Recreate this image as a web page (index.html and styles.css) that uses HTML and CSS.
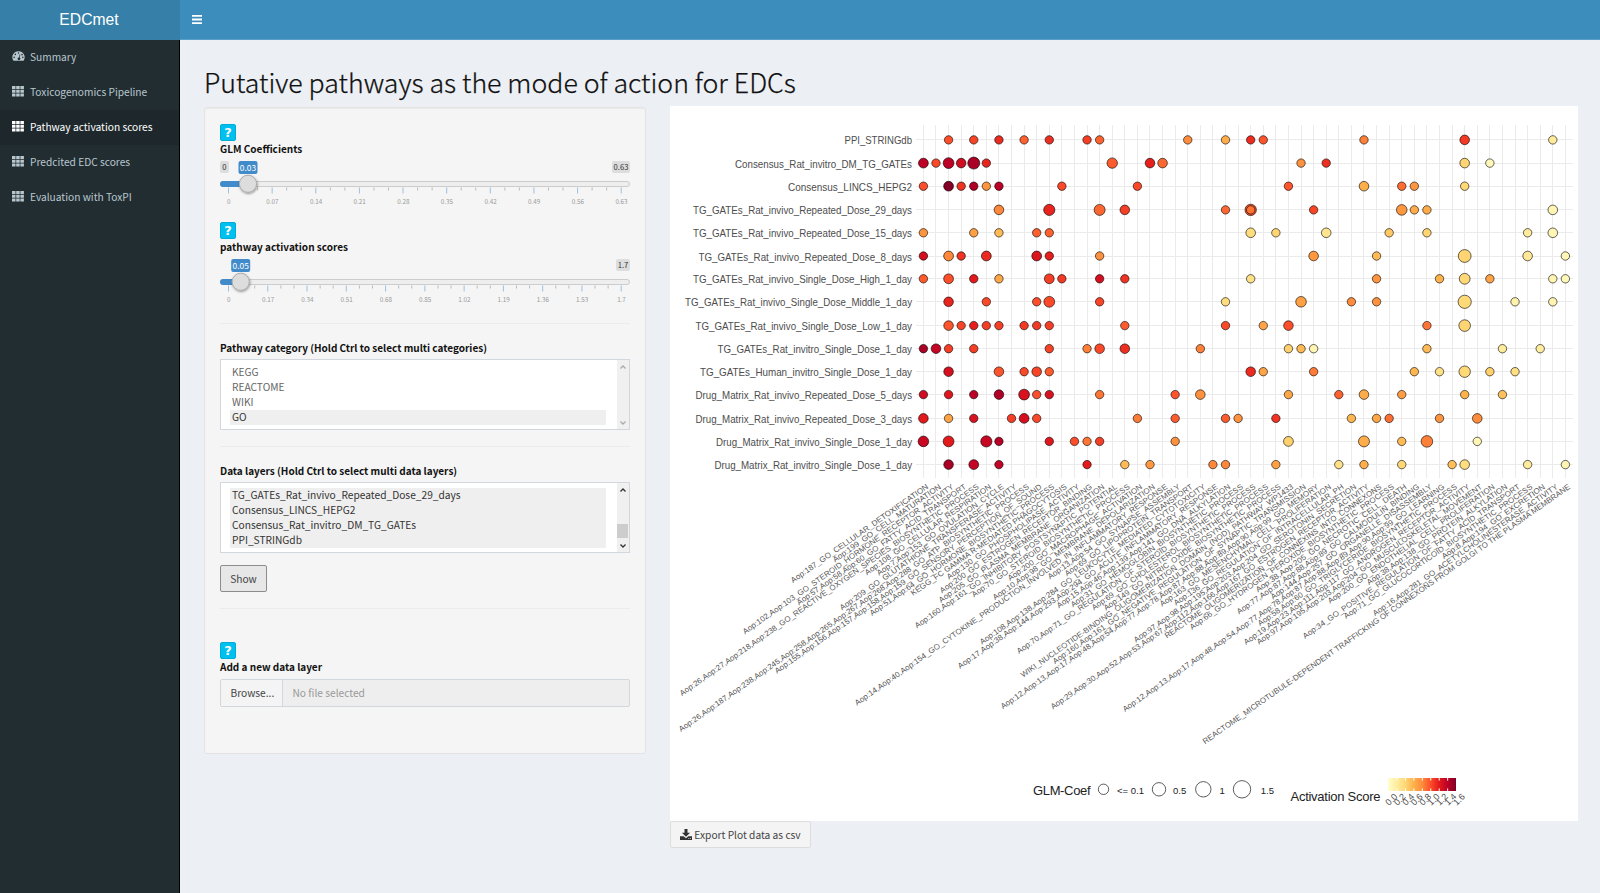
FILE: index.html
```html
<!DOCTYPE html>
<html lang="en">
<head>
<meta charset="utf-8">
<title>EDCmet</title>
<link rel="stylesheet" href="styles.css">
</head>
<body>
<svg class="defs" width="0" height="0">
  <symbol id="grid" viewBox="0 0 12 11"><path d="M0 0h3.500v3H0zM4.200 0h3.500v3H4.200zM8.400 0h3.500v3H8.400zM0 3.750h3.500v3H0zM4.200 3.750h3.500v3H4.200zM8.400 3.750h3.500v3H8.400zM0 7.500h3.500v3H0zM4.200 7.500h3.500v3H4.200zM8.400 7.500h3.500v3H8.400z"/></symbol>
</svg>
<header class="header">
  <div class="logo">EDCmet</div>
  <div class="navbar"><svg class="burger" viewBox="0 0 10 9"><path d="M0 0h10v1.8H0zM0 3.6h10v1.8H0zM0 7.2h10V9H0z"/></svg></div>
</header>
<div class="body">
  <nav class="sidebar">
    <a class="item"><svg class="ico dash" viewBox="0 0 14 12"><path fill-rule="evenodd" d="M7 .8a6.6 6.6 0 0 0-5.6 10.1q.2.3.6.3h10q.4 0 .6-.3A6.6 6.6 0 0 0 7 .8zM7 2a.85.85 0 1 1 0 1.700.85.85 0 0 1 0-1.7zM3.600 3.400a.85.85 0 1 1 0 1.700.85.85 0 0 1 0-1.7zM2.300 6.600a.85.85 0 1 1 0 1.700.85.85 0 0 1 0-1.7zM11.700 6.600a.85.85 0 1 1 0 1.700.85.85 0 0 1 0-1.7zM10.800 3.700a.85.85 0 1 1 0 1.700.85.85 0 0 1 0-1.7zM8.300 4.200l.7.2-.8 3.300a1.400 1.400 0 1 1-.75-.2z"/></svg>Summary</a>
    <a class="item"><svg class="ico"><use href="#grid"/></svg>Toxicogenomics Pipeline</a>
    <a class="item active"><svg class="ico"><use href="#grid"/></svg>Pathway activation scores</a>
    <a class="item"><svg class="ico"><use href="#grid"/></svg>Predcited EDC scores</a>
    <a class="item"><svg class="ico"><use href="#grid"/></svg>Evaluation with ToxPI</a>
  </nav>
  <main class="content">
    <h1 class="title"><span>Putative pathways as the mode of action for EDCs</span></h1>
    <div class="columns">
      <section class="well">
        <div class="help">?</div>
        <label class="label">GLM Coefficients</label>
        <svg class="slider" id="glm" width="412" height="52"></svg>
        <div class="help second">?</div>
        <label class="label">pathway activation scores</label>
        <svg class="slider" id="pas" width="412" height="52"></svg>
        <hr class="rule r1">
        <label class="label wide">Pathway category (Hold Ctrl to select multi categories)</label>
        <div class="select">
          <div class="options"><div>KEGG</div><div>REACTOME</div><div>WIKI</div><div class="sel">GO</div></div>
          <div class="scroll off"><svg viewBox="0 0 6 4"><path d="M.5 3.500L3 1l2.500 2.500"/></svg><svg viewBox="0 0 6 4"><path d="M.5.5L3 3 5.500.5"/></svg></div>
        </div>
        <hr class="rule r2">
        <label class="label wide">Data layers (Hold Ctrl to select multi data layers)</label>
        <div class="select">
          <div class="options"><div class="sel">TG_GATEs_Rat_invivo_Repeated_Dose_29_days</div><div class="sel">Consensus_LINCS_HEPG2</div><div class="sel">Consensus_Rat_invitro_DM_TG_GATEs</div><div class="sel">PPI_STRINGdb</div></div>
          <div class="scroll"><svg viewBox="0 0 6 4"><path d="M.5 3.500L3 1l2.500 2.500"/></svg><i class="thumb"></i><svg viewBox="0 0 6 4"><path d="M.5.5L3 3 5.500.5"/></svg></div>
        </div>
        <button class="show">Show</button>
        <hr class="rule r3">
        <div class="help third">?</div>
        <label class="label">Add a new data layer</label>
        <div class="file"><span class="browse">Browse...</span><span class="name">No file selected</span></div>
      </section>
      <section class="plotcol">
        <svg id="plot" class="plot" width="908" height="715" viewBox="670 106 908 715"></svg>
        <button class="export"><svg viewBox="0 0 12 11"><path fill-rule="evenodd" d="M4.500 0h3v3.700h2.600L6 7.700 1.900 3.700h2.600zM0 7.200h3.600L6 9.300l2.400-2.100H12V11H0zM8.300 9.200h.9v.8h-.9zM10 9.200h.9v.8H10z"/></svg>Export Plot data as csv</button>
      </section>
    </div>
  </main>
</div>
<script src="plot.js"></script>
</body>
</html>
```
FILE: styles.css
```css
* { box-sizing: border-box; }
body { margin: 0; height: 893px; overflow: hidden; background: #ecf0f5; font: 10.2px/15px "Noto Sans CJK SC", "Noto Sans", sans-serif; color: #333; }
.defs { position: absolute; }
.header { display: flex; height: 40px; border-bottom: 1px solid #5a9fc8; background: #3c8dbc; }
.logo { width: 180px; height: 40px; background: #367fa9; color: #fff; font: 15.7px/40px "Liberation Sans", sans-serif; text-align: center; padding-right: 2px; }
.navbar { padding: 15px 12px; }
.burger { display: block; width: 10px; height: 9px; fill: #fff; }
.body { display: flex; height: 853px; }
.sidebar { width: 180px; background: #222d32; border-right: 1px solid #000; }
.item { display: flex; align-items: center; height: 35px; padding: 0 0 3px 12px; color: #b8c7ce; }
.item.active { background: #1e282c; color: #fff; }
.ico { width: 12px; height: 11px; margin-right: 6px; fill: currentColor; }
.ico.dash { width: 13px; height: 12px; margin-right: 5px; }
.content { flex: 1; padding: 21px 22px 0 24px; }
.title { margin: 0; height: 45px; font-size: 26.7px; line-height: 42px; font-weight: 300; color: #111; white-space: nowrap; -webkit-text-stroke: .25px #111; }
.columns { display: flex; gap: 24px; }
.well { width: 442px; height: 647px; margin-top: 1px; padding: 16px 15px 0; background: #f5f5f5; border: 1px solid #e3e3e3; border-radius: 3px; display: flex; flex-direction: column; align-items: flex-start; box-shadow: inset 0 1px 1px rgba(0,0,0,.05); }
.well > * { flex-shrink: 0; }
.help { width: 16px; height: 17px; background: #00c0ef; border: 1px solid #00acd6; border-radius: 2px; color: #fff; font: bold 13px/15px "DejaVu Sans", sans-serif; text-align: center; }
.help.second { margin-top: 13px; }
.help.third { margin-top: 33px; }
.label { height: 15px; line-height: 15px; font-size: 10px; font-weight: 700; color: #111; white-space: nowrap; margin-top: 0; }
.slider { display: block; margin-top: 1px; overflow: visible; font-family: "Noto Sans CJK SC", "Noto Sans", sans-serif; }
.rule { width: 410px; margin: 0; border: 0; border-top: 1px solid #ebebeb; }
.r1 { margin-top: 16px; }
.r2 { margin-top: 16px; }
.label.wide { margin-top: 16px; }
.select { display: flex; width: 410px; height: 71px; margin-top: 4px; border: 1px solid #d2d6de; background: #fff; }
.options { flex: 1; padding: 5px 11px 0 9px; color: #666; }
.options div { height: 15px; line-height: 14px; padding-left: 2px; white-space: nowrap; }
.options .sel { background: #efefef; color: #333; }
.scroll { width: 12px; background: #f0f0f0; display: flex; flex-direction: column; justify-content: space-between; padding: 5px 0 4px; }
.scroll svg { width: 6px; height: 4px; margin-left: 3px; fill: none; stroke: #333; stroke-width: 1.3; }
.scroll.off svg { stroke: #aaa; }
.thumb { width: 11px; height: 14px; background: #cdcdcd; margin: auto 0 6px; }
.show { width: 47px; height: 27px; margin: 12px 0 0; padding: 0; background: #e7e7e7; border: 1px solid #8c8c8c; border-radius: 2px; color: #444; font: inherit; }
.r3 { margin-top: 16px; }
.file { display: flex; width: 410px; height: 28px; margin-top: 5px; border: 1px solid #d2d6de; border-radius: 2px; line-height: 26px; background: #eee; }
.browse { width: 62px; padding-left: 9.5px; background: #f4f4f4; border-right: 1px solid #d2d6de; color: #444; }
.name { padding-left: 9.5px; color: #999; }
.plotcol { display: flex; flex-direction: column; align-items: flex-start; }
.plot { display: block; background: #fff; font-family: "Liberation Sans", Arial, sans-serif; }
.export { width: 141px; height: 27px; padding: 0; border: 1px solid #ddd; border-radius: 2px; background: #f4f4f4; color: #444; font: inherit; display: flex; align-items: center; justify-content: center; white-space: nowrap; }
.export svg { width: 12px; height: 11px; margin-right: 2px; fill: #333; }
.grid-line { stroke: #ebebeb; stroke-width: 1; }
.row-label { font-size: 10.8px; fill: #4d4d4d; text-anchor: end; }
.col-label { font-size: 7.8px; fill: #555; }
.legend-title { font-size: 13px; fill: #222; }
.legend-text { font-size: 9.5px; fill: #222; }
.legend-tick { font-size: 9px; fill: #4d4d4d; }
.dot { stroke: #000; stroke-opacity: .75; stroke-width: .8; }
.key { fill: #fff; stroke: #333; stroke-width: .8; }
.tick-text { font-size: 6.3px; fill: #999; text-anchor: middle; }
.badge { font-size: 7.6px; fill: #333; text-anchor: middle; }
.badge.on { font-size: 8.4px; fill: #fff; }
```
FILE: plot.js
```js
const NS = 'http://www.w3.org/2000/svg';
function add(parent, tag, attrs, text) {
  const e = document.createElementNS(NS, tag);
  for (const k in attrs) e.setAttribute(k, attrs[k]);
  if (text !== undefined) e.textContent = text;
  parent.appendChild(e);
  return e;
}

// Range sliders
function slider(id, cx, value, min, max, maxW, labels, minors) {
  const s = document.getElementById(id);
  const defs = add(s, 'defs', {});
  const sh = add(defs, 'filter', { id: id + 'sh', x: '-50%', y: '-50%', width: '200%', height: '200%' });
  add(sh, 'feDropShadow', { dx: 0.5, dy: 1, stdDeviation: 0.8, 'flood-opacity': 0.4 });
  if (min !== null) {
    add(s, 'rect', { x: 0, y: 4, width: 9, height: 12, rx: 2, fill: '#ddd' });
    add(s, 'text', { x: 4.3, y: 12.8, class: 'badge' }, min);
  }
  add(s, 'rect', { x: 410 - maxW, y: 4, width: maxW, height: 12, rx: 2, fill: '#ddd' });
  add(s, 'text', { x: 410 - maxW / 2, y: 12.8, class: 'badge' }, max);
  add(s, 'rect', { x: 0.5, y: 24.5, width: 409, height: 5, rx: 2.5, fill: '#eee', stroke: '#ccc' });
  add(s, 'rect', { x: 0, y: 24, width: cx, height: 6, rx: 3, fill: '#428bca' });
  const n = labels.length - 1;
  for (let i = 0; i <= n; i++) {
    const x = 8.5 + 392.7 * i / n;
    add(s, 'rect', { x: x - 0.5, y: 30.5, width: 1, height: 6, fill: '#9dc0e0' });
    add(s, 'text', { x: x + 0.3, y: 47, class: 'tick-text' }, labels[i]);
    if (i < n) for (let j = 1; j <= minors; j++)
      add(s, 'rect', { x: x + 392.7 / n * j / (minors + 1) - 0.5, y: 30.5, width: 1, height: 3, fill: '#bbb' });
  }
  add(s, 'circle', { cx: cx, cy: 26.8, r: 8.6, fill: '#ddd', stroke: '#aaa', filter: 'url(#' + id + 'sh)' });
  add(s, 'rect', { x: cx - 9.5, y: 4, width: 19, height: 13, rx: 2, fill: '#428bca' });
  add(s, 'text', { x: cx, y: 13.6, class: 'badge on' }, value);
}
slider('glm', 28, '0.03', '0', '0.63', 18, ['0', '0.07', '0.14', '0.21', '0.28', '0.35', '0.42', '0.49', '0.56', '0.63'], 2);
slider('pas', 20.7, '0.05', null, '1.7', 14, ['0', '0.17', '0.34', '0.51', '0.68', '0.85', '1.02', '1.19', '1.36', '1.53', '1.7'], 2);

// Bubble plot
const plot = document.getElementById('plot');
const X0 = 923.4, DX = 12.588;
const YS = [139.9, 163.1, 186.2, 209.9, 232.8, 256, 278.8, 301.8, 325.6, 348.7, 371.7, 394.6, 418.4, 441.4, 464.6];
const RAMP = ['ffffcc', 'ffeda0', 'fed976', 'feb24c', 'fd8d3c', 'fc4e2a', 'e31a1c', 'bd0026', '800026'];
function color(v) {
  const i = Math.min(7, Math.floor(v)), f = v - i;
  const c = k => [0, 2, 4].map(p => parseInt(RAMP[k].substr(p, 2), 16));
  const a = c(i), b = c(i + 1);
  return 'rgb(' + a.map((q, k) => Math.round(q + (b[k] - q) * f)).join(',') + ')';
}
// Each row: label, label start x, points as "column:colour[:radius]"
const rows = [
  ['PPI_STRINGdb', 844.5, '2:5 4:5.2 6:5.7 8:4.7 10:5.6 13:5.3 14:4.7 21:4 24:3.2 26:5.7 27:4.9 35:4.2 43:5.4:4.8 50:1.1'],
  ['Consensus_Rat_invitro_DM_TG_GATEs', 735, '0:7:4.9 1:5.1 2:7:5.4 3:6.5:4.8 4:7.3:6 5:5.8 15:4.8:5.2 18:5.9:4.8 19:4.6:4.8 30:3.9 32:5.6 43:2.1:4.8 45:0.4'],
  ['Consensus_LINCS_HEPG2', 788, '0:5 2:7.9:4.9 3:5.5 4:7.2 5:3.8 6:7 11:5.1 17:5.1 29:4.9 35:3.1:4.8 38:4.5 39:3.7 43:2'],
  ['TG_GATEs_Rat_invivo_Repeated_Dose_29_days', 693, '6:4.1:4.8 10:5.8:5.6 14:4.6:5.5 16:5.3:4.8 24:4.6 26:4.9:5.7 26:4.4:4.2 31:5.2 38:3.7:5.3 39:3.2 40:3.2 50:0.5:4.8'],
  ['TG_GATEs_Rat_invivo_Repeated_Dose_15_days', 693, '0:3.8 4:3.5 6:2.8 9:4.7 10:4.7 26:1.8:4.8 28:2.1 32:1.4:4.8 37:2.4 40:2.1 48:1.1 50:0.5:4.8'],
  ['TG_GATEs_Rat_invivo_Repeated_Dose_8_days', 698.5, '0:6.4 2:4.1:4.9 3:5.5 5:5.7:4.9 9:6.2:4.9 10:5.9 14:3.9 31:3.7:4.8 36:2.8 43:2.1:6.4 48:1.2:4.8 51:0.5'],
  ['TG_GATEs_Rat_invivo_Single_Dose_High_1_day', 693, '0:4.8 2:5:4.9 4:6 6:3.3 10:5.3:4.9 11:5.4 14:6.4 16:5.5 26:1.6 36:3.8 41:3 43:2:5.4 45:3.4 50:0.6 51:0.4'],
  ['TG_GATEs_Rat_invivo_Single_Dose_Middle_1_day', 685, '2:5.8:4.8 5:5.1 9:5 10:5.1:5.4 14:5.2 24:1.8 30:3.5:5.3 34:4 36:3.9 43:2:6.6 47:0.7 50:0.6'],
  ['TG_GATEs_Rat_invivo_Single_Dose_Low_1_day', 695.5, '2:4.9:4.8 3:5.2 4:5.9 5:5.3 6:5.3 8:5.4 9:5.4 10:5.3 16:4.8 24:5.1 27:3.4 29:5:4.8 40:4.4 43:2.1:5.8'],
  ['TG_GATEs_Rat_invitro_Single_Dose_1_day', 717.5, '0:7.3 1:6.8:4.8 2:5.3 4:5.3 10:5.2 13:4.2 14:5.1:4.8 16:5.6:4.8 22:4.2 29:2.2 30:2.8 31:0.5 40:2.8 46:1.1 49:1'],
  ['TG_GATEs_Human_invitro_Single_Dose_1_day', 700, '2:6.4:4.8 6:4.9:4.8 8:5.1 9:5.2:4.8 10:4.8 26:5.7:4.8 27:3.4 31:4.3 39:2.9 41:1.6 43:2:5.7 45:2.2 47:1.7'],
  ['Drug_Matrix_Rat_invivo_Repeated_Dose_5_days', 695.5, '0:6.5 2:6.1 4:7 6:7.2:4.8 8:6.3:5.4 9:5 10:6.3 14:4.4 20:4.9 22:3.9:4.8 29:3.3 33:4.7 35:3.2:4.8 38:3.6 43:3 46:2.6'],
  ['Drug_Matrix_Rat_invivo_Repeated_Dose_3_days', 695.5, '0:6:4.8 2:3.4 4:6.3 7:5.3 8:6.4:4.9 9:5.1 17:4.3 20:4.8 24:4.8 25:3.9 28:5.5 34:2.9 36:3.3 37:4.5 41:3.8 44:4:4.8'],
  ['Drug_Matrix_Rat_invivo_Single_Dose_1_day', 716, '0:6.7:5.3 2:6:5.4 5:6.7:5.6 6:7.1 10:6.1 12:5 13:4.4 14:5.3 20:3.9 29:2.2:4.9 35:3.2:5.5 38:2.8 40:4.2:5.8 44:0.5'],
  ['Drug_Matrix_Rat_invitro_Single_Dose_1_day', 714.5, '2:7.3:4.8 4:6.8:4.9 6:6.9 13:6 16:2.8 18:3.7 23:4.1 24:4.1 28:3.5 33:1.6 35:3.1 38:2 42:2.7 43:1.8:4.8 48:1.1 51:0.6']
];
for (let i = 0; i < 52; i++) {
  const x = Math.round(X0 + DX * i - 0.5) + 0.5;
  add(plot, 'line', { x1: x, x2: x, y1: 125, y2: 478, class: 'grid-line' });
}
rows.forEach((r, k) => {
  const y = YS[k], gy = Math.round(y - 0.5) + 0.5;
  add(plot, 'line', { x1: 916, x2: 1573, y1: gy, y2: gy, class: 'grid-line' });
  add(plot, 'text', { x: 912, y: y + 4.5, class: 'row-label', textLength: 912 - r[1], lengthAdjust: 'spacingAndGlyphs' }, r[0]);
});
rows.forEach((r, k) => r[2].split(' ').forEach(p => {
  const [c, v, s] = p.split(':').map(Number);
  add(plot, 'circle', { cx: X0 + DX * c, cy: YS[k], r: s || 4.2, fill: color(v), class: 'dot' });
}));

// Column labels with the x of their lower-left end
const cols = [
  ['Aop:187_GO_CELLULAR_DETOXIFICATION', 792], ['Aop:199_GO_CELL_MATURATION', 834],
  ['Aop:102,Aop:103_GO_STEROID_HORMONE_RECEPTOR_ACTIVITY', 744], ['Aop:57,Aop:58,Aop:60_GO_FATTY_ACID_TRANSPORT', 798],
  ['Aop:26,Aop:27,Aop:218,Aop:238_GO_REACTIVE_OXYGEN_SPECIES_BIOSYNTHETIC_PROCESS', 681], ['Aop:108_GO_CELLULAR_RESPIRATION', 866],
  ['Aop:7,Aop:153_GO_OVULATION_CYCLE', 878], ['Aop:209_GO_GLUTATHIONE_TRANSFERASE_ACTIVITY', 841],
  ['Aop:26,Aop:187,Aop:238,Aop:245,Aop:258,Aop:265,Aop:267,Aop:268,Aop:288_GO_ATP_BIOSYNTHETIC_PROCESS', 680],
  ['Aop:155,Aop:156,Aop:157,Aop:158,Aop:159_GO_SENSORY_PERCEPTION_OF_SOUND', 776],
  ['Aop:51,Aop:64_GO_HORMONE_BIOSYNTHETIC_PROCESS', 871], ['KEGG_FC GAMMA R-MEDIATED PHAGOCYTOSIS', 912],
  ['Aop:130_GO_PHOSPHOLIPASE_ACTIVITY', 948], ['Aop:200_GO_ESTROGEN_RECEPTOR_BINDING', 941],
  ['Aop:205_GO_PLASMA_MEMBRANE_ORGANIZATION', 940], ['Aop:160,Aop:161_GO_INHIBITORY_POSTSYNAPTIC_POTENTIAL', 916],
  ['Aop:70_GO_STEROID_BIOSYNTHETIC_PROCESS', 973], ['Aop:200_GO_MACROPHAGE_ACTIVATION', 1009],
  ['Aop:10,Aop:98_GO_MEMBRANE_DEPOLARIZATION', 994],
  ['Aop:14,Aop:40,Aop:154_GO_CYTOKINE_PRODUCTION_INVOLVED_IN_INFLAMMATORY_RESPONSE', 856],
  ['Aop:13,Aop:54_GO_SYNAPSE_ASSEMBLY', 1049], ['Aop:69_GO_LIPOPROTEIN_TRANSPORT', 1066],
  ['Aop:108,Aop:138,Aop:284_GO_LEUKOCYTE_MEDIATED_CYTOTOXICITY', 981],
  ['Aop:17,Aop:38,Aop:144,Aop:293,Aop:294_GO_ACUTE_INFLAMMATORY_RESPONSE', 959],
  ['Aop:15,Aop:46,Aop:139,Aop:141_GO_DNA_ALKYLATION', 1058], ['Aop:31_GO_HEMOGLOBIN_BIOSYNTHETIC_PROCESS', 1072],
  ['Aop:70,Aop:71_GO_REGULATION_OF_STEROID_BIOSYNTHETIC_PROCESS', 1018], ['Aop:69_GO_CHOLESTEROL_BIOSYNTHETIC_PROCESS', 1093],
  ['Aop:149_GO_NITRIC_OXIDE_BIOSYNTHETIC_PROCESS', 1105],
  ['WIKI_NUCLEOTIDE-BINDING_OLIGOMERIZATION_DOMAIN_(NOD)_PATHWAY_WP1433', 1022],
  ['Aop:160,Aop:161_GO_NEGATIVE_REGULATION_OF_SYNAPTIC_TRANSMISSION', 1054],
  ['Aop:12,Aop:13,Aop:17,Aop:48,Aop:54,Aop:77,Aop:78,Aop:87,Aop:88,Aop:89,Aop:90,Aop:99_GO_MEMORY', 1002],
  ['Aop:163_GO_MESENCHYMAL_CELL_PROLIFERATION', 1161], ['Aop:136_GO_REGULATION_OF_INTRACELLULAR_PH', 1175],
  ['Aop:97,Aop:98,Aop:195,Aop:203,Aop:204_GO_SEROTONIN_SECRETION', 1135],
  ['Aop:29,Aop:30,Aop:52,Aop:53,Aop:67,Aop:112,Aop:166,Aop:167_GO_ESTROGEN_RECEPTOR_ACTIVITY', 1052],
  ['REACTOME_OLIGOMERIZATION_OF_CONNEXINS_INTO_CONNEXONS', 1166], ['Aop:66_GO_HYDROGEN_PEROXIDE_BIOSYNTHETIC_PROCESS', 1191],
  ['Aop:38,Aop:205_GO_NECROTIC_CELL_DEATH', 1257], ['Aop:77,Aop:87,Aop:88,Aop:89_GO_CALMODULIN_BINDING', 1238],
  ['Aop:144,Aop:257_GO_ORGANELLE_DISASSEMBLY', 1272],
  ['Aop:12,Aop:13,Aop:17,Aop:48,Aop:54,Aop:77,Aop:78,Aop:87,Aop:88,Aop:89,Aop:90,Aop:99_GO_LEARNING', 1124],
  ['Aop:58,Aop:60_GO_TRIGLYCERIDE_BIOSYNTHETIC_PROCESS', 1259], ['Aop:19,Aop:23,Aop:111,Aop:117_GO_ANDROGEN_RECEPTOR_ACTIVITY', 1245],
  ['Aop:97,Aop:195,Aop:203,Aop:204_GO_MUSCULOSKELETAL_MOVEMENT', 1258], ['Aop:200_GO_ENDOTHELIAL_CELL_PROLIFERATION', 1329],
  ['Aop:38,Aop:138_GO_PROTEIN_ALKYLATION', 1368], ['Aop:34_GO_POSITIVE_REGULATION_OF_FATTY_ACID_TRANSPORT', 1304],
  ['Aop:71_GO_GLUCOCORTICOID_BIOSYNTHETIC_PROCESS', 1345], ['Aop:8,Aop:194_GO_EXCRETION', 1443],
  ['Aop:16,Aop:281_GO_ACETYLCHOLINESTERASE_ACTIVITY', 1374],
  ['REACTOME_MICROTUBULE-DEPENDENT TRAFFICKING OF CONNEXONS FROM GOLGI TO THE PLASMA MEMBRANE', 1204]
];
const A = 35 * Math.PI / 180;
cols.forEach(([t, sx], i) => {
  const ex = X0 + DX * i + 4.5, ey = 488;
  const len = (ex - sx) / Math.cos(A);
  add(plot, 'text', { x: 0, y: 0, class: 'col-label', textLength: len, lengthAdjust: 'spacingAndGlyphs',
    transform: `translate(${sx + 1} ${ey + (ex - sx) * Math.tan(A)}) rotate(-35)` }, t);
});

// Legends
add(plot, 'text', { x: 1033, y: 794.5, class: 'legend-title', textLength: 57.5 }, 'GLM-Coef');
[[1103.5, 5.2, '<= 0.1', 1117], [1159, 6.7, '0.5', 1173], [1203.3, 7.7, '1', 1219.5], [1242, 8.7, '1.5', 1260.8]].forEach(k => {
  add(plot, 'circle', { cx: k[0], cy: 789.3, r: k[1], class: 'key' });
  add(plot, 'text', { x: k[3], y: 793.7, class: 'legend-text' }, k[2]);
});
add(plot, 'text', { x: 1290.5, y: 801, class: 'legend-title', textLength: 90 }, 'Activation Score');
const g = add(add(plot, 'defs', {}), 'linearGradient', { id: 'ramp' });
RAMP.forEach((c, i) => add(g, 'stop', { offset: i / 8, 'stop-color': '#' + c }));
add(plot, 'rect', { x: 1388, y: 778, width: 68, height: 13, fill: 'url(#ramp)' });
for (let i = 0; i < 9; i++) {
  const x = 1388.5 + 8.45 * i;
  if (i > 0 && i < 8) {
    add(plot, 'rect', { x: x - 0.5, y: 778, width: 1, height: 2.6, fill: '#fff' });
    add(plot, 'rect', { x: x - 0.5, y: 788.4, width: 1, height: 2.6, fill: '#fff' });
  }
  add(plot, 'text', { class: 'legend-tick', transform: `translate(${x + 0.6} ${806}) rotate(-45)` }, (i * 0.2).toFixed(1));
}
```
